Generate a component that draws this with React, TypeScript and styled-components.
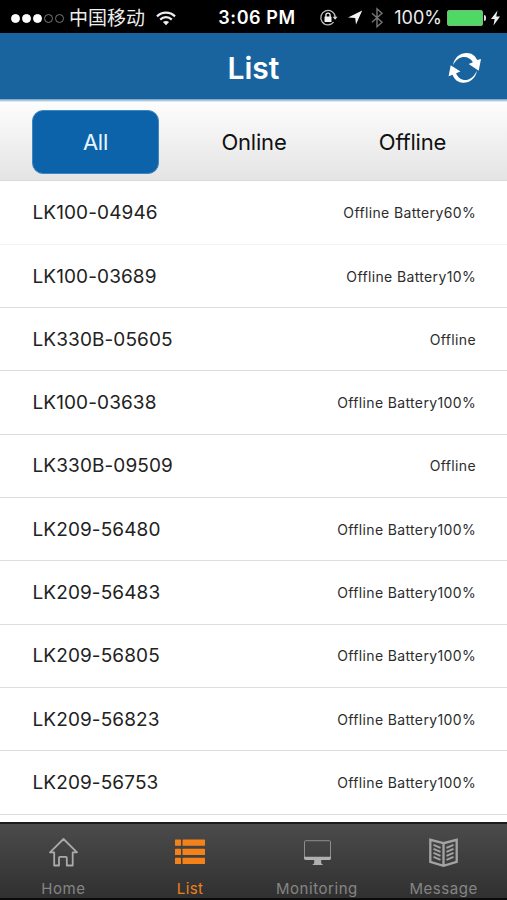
import React from "react";
import styled, { createGlobalStyle } from "styled-components";

const GlobalStyle = createGlobalStyle`
  * { box-sizing: border-box; }
  html, body { margin: 0; padding: 0; background: #fff; }
  body { font-family: Inter, "Noto Sans CJK SC", sans-serif; overflow: hidden; }
`;

const Screen = styled.div`
  width: 507px;
  height: 900px;
  display: flex;
  flex-direction: column;
  background: #fff;
  overflow: hidden;
`;

const StatusBar = styled.div`
  height: 33px;
  flex: none;
  display: grid;
  grid-template-columns: 1fr auto 1fr;
  align-items: center;
  padding: 2px 7px 0 11px;
  background: #000;
  color: #eee;
  font-size: 17px;
  line-height: 30px;
  white-space: nowrap;
`;

const StatusGroup = styled.div<{ $end?: boolean }>`
  display: flex;
  align-items: center;
  justify-content: ${(p) => (p.$end ? "flex-end" : "flex-start")};
`;

const Signal = styled.div`
  display: flex;
  gap: 2px;
  margin-right: 5px;
`;

const Dot = styled.i<{ $on: boolean }>`
  width: 9px;
  height: 9px;
  border-radius: 50%;
  border: 1px solid ${(p) => (p.$on ? "#fff" : "#777")};
  background: ${(p) => (p.$on ? "#fff" : "transparent")};
`;

const Carrier = styled.span`
  font-family: "Noto Sans CJK SC", sans-serif;
  font-size: 19px;
  margin-right: 11px;
  padding-bottom: 2px;
`;

const Clock = styled.span`
  font-size: 18px;
  font-weight: 600;
  letter-spacing: 0.6px;
  padding-left: 3px;
  color: #fff;
`;

const Percent = styled.span`
  font-size: 18px;
  letter-spacing: 0;
  margin: 0 5px 0 9px;
`;

const Battery = styled.span`
  width: 36px;
  height: 16px;
  border-radius: 2px;
  border: 1px solid #79b77f;
  background: #4fd964;
`;

const BatteryTip = styled.span`
  width: 2px;
  height: 6px;
  margin: 0 5px 0 1px;
  border-radius: 0 2px 2px 0;
  background: #ddd;
`;

const Header = styled.header`
  height: 66px;
  flex: none;
  display: grid;
  grid-template-columns: 1fr auto 1fr;
  align-items: center;
  padding: 3px 25px 0;
  background: #19649f;
  color: #fff;
`;

const Title = styled.h1`
  grid-column: 2;
  margin: 0;
  font-size: 30px;
  line-height: 36px;
  font-weight: 600;
`;

const Refresh = styled.button`
  justify-self: end;
  display: flex;
  padding: 0;
  border: 0;
  background: none;
`;

const Filters = styled.nav`
  height: 82px;
  flex: none;
  display: grid;
  grid-template-columns: repeat(3, 127px);
  justify-content: space-between;
  padding: 11px 31px 7px 32px;
  border-top: 3px solid #aecbe0;
  border-bottom: 1px solid #dadada;
  background: linear-gradient(#fdfdfd, #e4e4e4);
  border-image: linear-gradient(#6b9dc4, #f0f6fa 3px, #dadada) 3 0 1 0;
`;

const Filter = styled.button<{ $active?: boolean }>`
  height: 64px;
  margin-top: -3px;
  padding: 0 0 1px;
  border: 1px solid ${(p) => (p.$active ? "#3f87c0" : "transparent")};
  border-radius: 11px;
  background: ${(p) => (p.$active ? "#0c63aa" : "none")};
  color: ${(p) => (p.$active ? "#e8f5ff" : "#111")};
  font: 400 22px/28px Inter, sans-serif;
  letter-spacing: -0.2px;
`;

const List = styled.ul`
  height: 641px;
  flex: none;
  margin: 0;
  padding: 0.6px 0 0;
  list-style: none;
`;

const Row = styled.li<{ $faint: boolean }>`
  height: 63.3px;
  display: flex;
  align-items: center;
  justify-content: space-between;
  padding: 0 31px 0 32.5px;
  border-bottom: 1.5px solid ${(p) => (p.$faint ? "#f3f3f3" : "#dedede")};
`;

const Device = styled.span`
  font-size: 19px;
  letter-spacing: 0.1px;
  color: #222;
`;

const State = styled.span`
  font-size: 14px;
  letter-spacing: 0.36px;
  color: #2c2c2c;
`;

const TabBar = styled.nav`
  height: 78px;
  flex: none;
  display: grid;
  grid-template-columns: repeat(4, 1fr);
  border-top: 2px solid #1c1c1c;
  border-bottom: 2px solid #0a0a0a;
  background: linear-gradient(#4b4b4b, #303030);
`;

const Tab = styled.button<{ $active?: boolean }>`
  display: flex;
  flex-direction: column;
  align-items: center;
  padding: 12px 0 0;
  border: 0;
  background: none;
  color: ${(p) => (p.$active ? "#f08019" : "#858585")};
  font: 400 15px/20px Inter, sans-serif;
  letter-spacing: ${(p) => (p.$active ? "0.4px" : "0.55px")};
`;

const TabIcon = styled.svg`
  width: 32px;
  height: 32px;
  flex: none;
  margin-bottom: 11px;
`;

const devices = [
  ["LK100-04946", "Offline Battery60%"],
  ["LK100-03689", "Offline Battery10%"],
  ["LK330B-05605", "Offline"],
  ["LK100-03638", "Offline Battery100%"],
  ["LK330B-09509", "Offline"],
  ["LK209-56480", "Offline Battery100%"],
  ["LK209-56483", "Offline Battery100%"],
  ["LK209-56805", "Offline Battery100%"],
  ["LK209-56823", "Offline Battery100%"],
  ["LK209-56753", "Offline Battery100%"],
];

const WifiIcon = () => (
  <svg width="20" height="15" viewBox="0 0 20 15" fill="none" stroke="#eee" strokeWidth="2.2">
    <path d="M1 5.4C6 .4 14 .4 19 5.4M4.2 8.6C7.6 5.4 12.4 5.4 15.8 8.6" />
    <path d="M10 14.2 6.9 11C8.7 9.5 11.3 9.5 13.1 11Z" fill="#eee" stroke="none" />
  </svg>
);

const StatusIcons = () => (
  <svg width="66" height="22" viewBox="0 0 66 22" fill="none">
    <path d="M14.6 15.2A7.2 7.2 0 1 1 16.2 10" stroke="#bbb" strokeWidth="1.3" />
    <path d="M13.7 9.8h4.8l-2.4 3Z" fill="#ddd" />
    <rect x="5.5" y="9.5" width="7" height="5.6" rx=".6" fill="#f2f2f2" />
    <path d="M6.9 10V8.2a2.1 2.1 0 0 1 4.2 0V10" stroke="#f2f2f2" strokeWidth="1.3" />
    <path d="M43.2 3.4 37 17.4 36.2 10.9 29 10.5Z" fill="#f4f4f4" />
    <path d="m53 6.3 10 9-5 4.5V1.8l5 4.5-10 9" stroke="#777" strokeWidth="1.4" />
  </svg>
);

const BoltIcon = () => (
  <svg width="9" height="16" viewBox="0 0 9 16">
    <path d="M6.5.5 0 9h3.6L2.5 15.5 9 6.5H5.2Z" fill="#eee" />
  </svg>
);

const RefreshIcon = () => (
  <svg width="34" height="32" viewBox="0 0 34 32" fill="#fff">
    <path d="M5 13.2C6.4 5.1 12.8.8 19.1 1.1c4.6.2 8 2.5 10.1 7l3.8-1.2-2.3 11.8-10-6.8 4.2-1.6C21.2 3.4 10.5 2 5 13.2Z" />
    <path d="M29 18.5C27.7 26.7 21.4 31.2 14.8 30.8 9.7 30.4 6.4 27.7 4.6 22.8L.6 24.2 2.7 13.3l9.7 6.3-4.3 1.7c3.2 8.7 15.1 10.2 20.9-2.8Z" />
  </svg>
);

const HomeIcon = () => (
  <TabIcon viewBox="0 0 32 32" fill="none" stroke="#aaa" strokeWidth="1.8" strokeLinejoin="round">
    <path d="M16.5 3 3 16.3h4.2v13.2H12v-7.7q0-1 1-1h5.8q1 0 1 1v7.7h5.9V16.3H30Z" />
  </TabIcon>
);

const ListIcon = () => (
  <TabIcon viewBox="0 0 32 32" fill="#f58218">
    {[3.5, 12.7, 21.8].map((y) => (
      <React.Fragment key={y}>
        <rect x="1" y={y} width="6" height="6.3" rx=".6" />
        <rect x="8.5" y={y} width="22.5" height="6.3" rx=".6" />
      </React.Fragment>
    ))}
  </TabIcon>
);

const MonitorIcon = () => (
  <TabIcon viewBox="0 0 32 32">
    <rect x="3.5" y="4.7" width="26" height="17.5" rx="1" fill="none" stroke="#8d8d8d" />
    <path d="M3 20.8h27v1.5q0 1.7-1.5 1.7h-8.3v3.2l2 1.9H11.2l2-1.9V24H4.5Q3 24 3 22.3Z" fill="#b0b0b0" />
  </TabIcon>
);

const MessageIcon = () => (
  <TabIcon viewBox="0 0 32 32" fill="none" stroke="#a3a3a3" strokeWidth="2">
    <path d="M15.5 7.2 2.3 3.8v22l13.2 4 13.2-4v-22ZM15.5 7v23" strokeWidth="2.3" />
    <path d="m5.5 8.8 7 3m-7 1 7 3m-7 1 7 3m-7 1 7 3M25.5 8.8l-7 3m7 1-7 3m7 1-7 3m7 1-7 3" />
  </TabIcon>
);

export default function App() {
  return (
    <Screen>
      <GlobalStyle />
      <StatusBar>
        <StatusGroup>
          <Signal>
            {[true, true, true, false, false].map((on, i) => (
              <Dot key={i} $on={on} />
            ))}
          </Signal>
          <Carrier>中国移动</Carrier>
          <WifiIcon />
        </StatusGroup>
        <Clock>3:06 PM</Clock>
        <StatusGroup $end>
          <StatusIcons />
          <Percent>100%</Percent>
          <Battery />
          <BatteryTip />
          <BoltIcon />
        </StatusGroup>
      </StatusBar>
      <Header>
        <Title>List</Title>
        <Refresh aria-label="Refresh">
          <RefreshIcon />
        </Refresh>
      </Header>
      <Filters>
        <Filter $active>All</Filter>
        <Filter>Online</Filter>
        <Filter>Offline</Filter>
      </Filters>
      <List>
        {devices.map(([name, state], i) => (
          <Row key={name} $faint={i === 0}>
            <Device>{name}</Device>
            <State>{state}</State>
          </Row>
        ))}
      </List>
      <TabBar>
        <Tab><HomeIcon />Home</Tab>
        <Tab $active><ListIcon />List</Tab>
        <Tab><MonitorIcon />Monitoring</Tab>
        <Tab><MessageIcon />Message</Tab>
      </TabBar>
    </Screen>
  );
}
